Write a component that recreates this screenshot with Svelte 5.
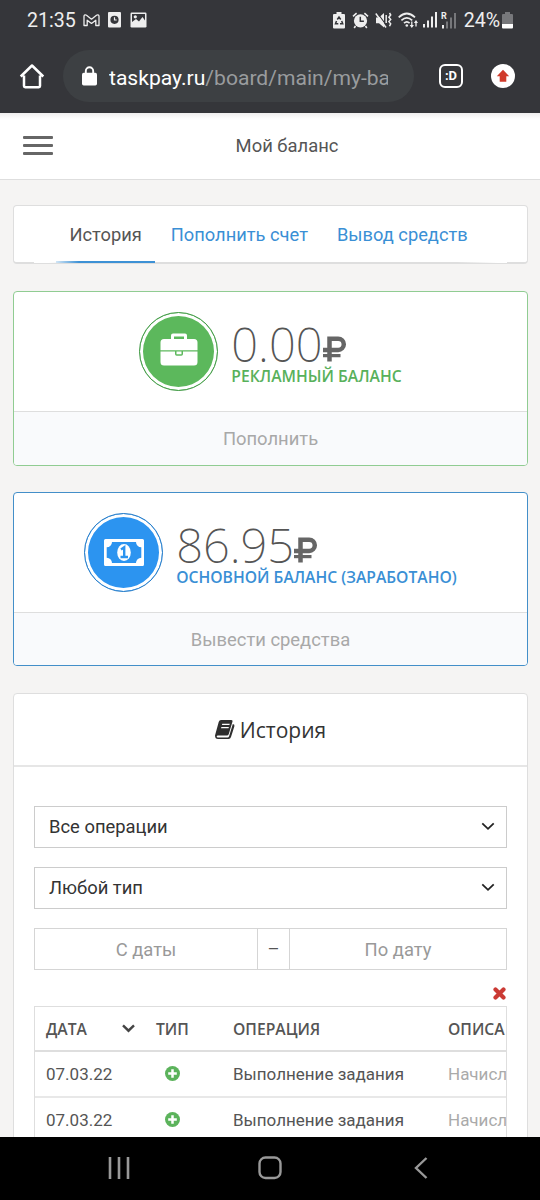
<script lang="ts">
  type Balance = {
    kind: string;
    amount: string;
    label: string;
    action: string;
  };

  const balances: Balance[] = [
    { kind: 'green', amount: '0.00', label: 'Рекламный баланс', action: 'Пополнить' },
    { kind: 'blue', amount: '86.95', label: 'Основной баланс (заработано)', action: 'Вывести средства' },
  ];

  const tabs = ['История', 'Пополнить счет', 'Вывод средств'];
  let activeTab = $state(0);

  const filters = ['Все операции', 'Любой тип'];

  const rows = [
    { date: '07.03.22', operation: 'Выполнение задания', description: 'Начисл' },
    { date: '07.03.22', operation: 'Выполнение задания', description: 'Начисл' },
  ];
</script>

<div class="screen">
  <div class="chrome">
    <div class="status">
      <span class="time">21:35</span>
      <svg class="gmail" width="17" height="13" viewBox="0 0 17 13" fill="none" stroke="#eee" stroke-width="1.3" stroke-linejoin="round">
        <path d="M1 11.500V2.200C1 .8 2.500.5 3.500 1.300L8.500 5.200l5-3.900c1-.8 2.500-.5 2.500.9v9.300h-3.200V6.200L8.500 9.400 4.200 6.200v5.300z" />
      </svg>
      <svg class="clock" width="13" height="16" viewBox="0 0 13 16">
        <rect width="13" height="15.500" rx="1" fill="#eee" />
        <circle cx="6.500" cy="7.800" r="4.100" fill="#35363a" />
        <path d="M6.500 5.300v2.700h2.200" fill="none" stroke="#eee" stroke-width="1.200" />
      </svg>
      <svg class="photo" width="17" height="16" viewBox="0 0 17 16">
        <rect x=".5" y=".5" width="16" height="15" rx="1.200" fill="#eee" />
        <path d="M2 10l4-3 3 2.500L12.500 5 15 8.500V2H2z" fill="#35363a" />
        <circle cx="5.300" cy="4.800" r="1.600" fill="#eee" />
      </svg>

      <div class="status-right">
        <svg width="12" height="17" viewBox="0 0 12 17">
          <path d="M3.500 0h5v2H11q1 0 1 1v12.500q0 1-1 1H1q-1 0-1-1V3q0-1 1-1h2.500z" fill="#eee" />
          <path d="M4.300 7.500L6 5l1.700 2.500M8.700 9l1 2.700H7M5.300 11.700H2.500l1-2.700" fill="none" stroke="#35363a" stroke-width="1.500" />
        </svg>
        <svg class="alarm" width="17" height="17" viewBox="0 0 17 17" fill="none" stroke="#eee">
          <circle cx="8.500" cy="8.800" r="6.600" fill="#eee" stroke="none" />
          <path d="M1 4.300L4.600 1.200M12.400 1.200L16 4.300M3.500 14l-1.300 2M13.500 14l1.300 2" stroke-width="1.600" />
          <path d="M8.300 4.800v4.500h3.600" stroke="#35363a" stroke-width="1.500" />
        </svg>
        <svg class="mute" width="17" height="17" viewBox="0 0 17 17" fill="none" stroke="#eee">
          <path d="M1 5.500h3l5-4.500v14.500l-5-4.200H1z" fill="#eee" stroke="none" />
          <path d="M2 .5l9.500 13" stroke="#35363a" stroke-width="1.200" />
          <path d="M.8 1.500L11 15.500" stroke-width="1.500" />
          <path d="M11.200 3v8M14.500 1l1.200 2-1.800 2.200 1.800 2.200-1.800 2.200 1.800 2.200-1.200 2.500" stroke-width="1.500" />
        </svg>
        <svg class="wifi" width="21" height="17" viewBox="0 0 21 17" fill="none" stroke="#eee" stroke-width="1.700">
          <path d="M.7 5.300Q8.800-2.300 17 5.300M3.400 8.300q5.400-5 10.800 0M6 11.200q2.800-2.600 5.600 0" />
          <circle cx="8.800" cy="13.500" r="1.300" fill="#eee" stroke="none" />
          <path d="M13.800 9.500v5M18 14.500v-5" stroke-width="1.300" />
          <path d="M11.700 13h4.200l-2.100 3zM15.900 11H20l-2-3z" fill="#eee" stroke="none" />
        </svg>
        <svg class="signal" width="14" height="16" viewBox="0 0 14 16" fill="#eee">
          <rect y="12" width="2" height="3.500" /><rect x="4" y="8.500" width="2" height="7" />
          <rect x="8" y="4.500" width="2" height="11" /><rect x="12" y="0" width="2" height="15.500" />
        </svg>
        <svg class="roaming" width="16" height="17" viewBox="0 0 16 17" fill="#77787b">
          <text x="0" y="7" font-family="Roboto, sans-serif" font-size="9" font-weight="700" fill="#eee">R</text>
          <rect x="1" y="13" width="2" height="3.500" fill="#eee" /><rect x="5" y="9.500" width="2" height="7" />
          <rect x="9" y="5.500" width="2" height="11" /><rect x="13" y="1" width="2" height="15.500" />
        </svg>
        <span class="percent">24%</span>
        <svg class="battery" width="11" height="17" viewBox="0 0 11 17">
          <path d="M3 0h5v2h2q1 0 1 1v9H0V3q0-1 1-1h2z" fill="#77787b" />
          <path d="M0 12h11v3.500q0 1-1 1H1q-1 0-1-1z" fill="#fff" />
        </svg>
      </div>
    </div>

    <div class="toolbar">
      <svg width="26" height="26" viewBox="0 0 26 26" fill="none" stroke="#fff" stroke-width="2.500" stroke-linejoin="round">
        <path d="M1.700 13.500L13 2.500l11.300 11M5 12.500V23q0 1.200 1.200 1.200h13.600Q21 24.200 21 23V12.500" />
      </svg>
      <div class="url">
        <svg width="15" height="20" viewBox="0 0 15 20">
          <path d="M3.800 8V5a3.700 3.700 0 0 1 7.400 0v3" fill="none" stroke="#fff" stroke-width="1.900" />
          <rect y="6.800" width="15" height="12.700" rx="1.700" fill="#fff" />
        </svg>
        <span class="address">taskpay.ru<i>/board/main/my-ba</i></span>
      </div>
      <div class="tab-count">:D</div>
      <svg class="update" width="24" height="24" viewBox="0 0 24 24">
        <circle cx="12" cy="12" r="12" fill="#fff" />
        <path d="M12 5.700l6.200 6.500h-2.900v5.500H8.700v-5.500H5.800z" fill="#d03a2b" />
      </svg>
    </div>
  </div>

  <header>
    <button class="burger" aria-label="Меню"><span></span><span></span><span></span></button>
    <h1>Мой баланс</h1>
  </header>

  <main>
    <nav>
      {#each tabs as tab, i}
        <button class="tab" class:active={activeTab === i} onclick={() => (activeTab = i)}>{tab}</button>
      {/each}
    </nav>

    {#each balances as balance}
      <section class="balance {balance.kind}">
        <div class="info">
          <div class="badge">
            {#if balance.kind === 'green'}
              <svg width="38" height="33" viewBox="0 0 38 33">
                <path d="M11 6V2.500Q11 .5 13 .5h12q2 0 2 2V6h7q3.500 0 3.500 3.500v7.800H.5V9.500Q.5 6 4 6zM14 6h10V3.500H14zM.5 18.500H15v2.500q0 1.700 1.700 1.700h4.600q1.700 0 1.700-1.700v-2.500h14.500V29q0 3.500-3.500 3.500H4Q.5 32.500.5 29zM16.500 18.500h5v2.700h-5z" fill="#fff" fill-rule="evenodd" />
              </svg>
            {:else}
              <svg width="40" height="27" viewBox="0 0 40 27">
                <path d="M1.500 0h37q1.500 0 1.500 1.500v24q0 1.500-1.500 1.500h-37Q0 27 0 25.500v-24Q0 0 1.500 0zM8 3a5.300 5.300 0 0 1-5.300 5.300v10.400A5.300 5.300 0 0 1 8 24h24a5.300 5.300 0 0 1 5.300-5.300V8.300A5.300 5.300 0 0 1 32 3z" fill="#fff" fill-rule="evenodd" />
                <ellipse cx="20" cy="13.500" rx="6.800" ry="8.500" fill="#fff" />
                <path d="M17 10.500l3.200-2.200v9.400M16.500 18h7.500" fill="none" stroke="#2c94f0" stroke-width="2.400" />
              </svg>
            {/if}
          </div>
          <div class="figures">
            <div class="amount">
              {balance.amount}<svg width="24" height="26" viewBox="0 0 24 26" fill="none" stroke="#666" stroke-width="4.500">
                <path d="M6.500 25.500V2.700h8.700a5.600 5.600 0 0 1 0 11.200H0" /><path d="M0 19.600h17.500" stroke-width="3.200" />
              </svg>
            </div>
            <div class="label">{balance.label}</div>
          </div>
        </div>
        <button class="action">{balance.action}</button>
      </section>
    {/each}

    <section class="history">
      <h2>
        <svg width="20" height="19" viewBox="0 0 20 19">
          <path d="M6 0h10.300q1.700 0 1.200 1.600L13.800 14q-.5 1.500-2 1.500H3q-1.300 0-1.300 1t1.300 1h9.400q1.300 0 1.700-1.300L17.800 4q2.200.5 1.600 2.300L16 17q-.6 2-2.600 2H3Q0 19 0 15.500L3.700 2Q4.300 0 6 0zM7.300 3.800l-.4 1.300h7.500l.4-1.300zM6.400 6.900L6 8.200h7.500l.4-1.300z" fill="#2f2f2f" fill-rule="evenodd" />
        </svg>
        История
      </h2>
      <div class="body">
        {#each filters as filter}
          <div class="select">
            {filter}
            <svg width="14" height="9" viewBox="0 0 14 9" fill="none" stroke="#222" stroke-width="1.800"><path d="M1.300 1.300L7 6.800l5.700-5.500" /></svg>
          </div>
        {/each}
        <div class="dates">
          <div class="from">С даты</div>
          <div class="dash">–</div>
          <div class="to">По дату</div>
        </div>
        <div class="reset">
          <svg width="13" height="13" viewBox="0 0 13 13" stroke="#cb3a34" stroke-width="4.200" stroke-linecap="round"><path d="M2.500 2.500l8 8M10.500 2.500l-8 8" /></svg>
        </div>
        <div class="table">
          <div class="row head">
            <span class="sort">Дата
              <svg width="13" height="9" viewBox="0 0 13 9" fill="none" stroke="#444" stroke-width="2.400"><path d="M1 1.300l5.500 5.400L12 1.300" /></svg>
            </span>
            <span>Тип</span>
            <span>Операция</span>
            <span>Описа</span>
          </div>
          {#each rows as row}
            <div class="row">
              <span>{row.date}</span>
              <span class="type">
                <svg width="15" height="15" viewBox="0 0 15 15">
                  <circle cx="7.500" cy="7.500" r="7.500" fill="#5cb35c" />
                  <path d="M7.500 3.200v8.600M3.200 7.500h8.600" stroke="#fff" stroke-width="2.500" />
                </svg>
              </span>
              <span>{row.operation}</span>
              <span class="muted">{row.description}</span>
            </div>
          {/each}
        </div>
      </div>
    </section>
  </main>

  <footer>
    <svg width="22" height="22" viewBox="0 0 22 22" stroke="#999" stroke-width="2.600"><path d="M2 0v22M11 0v22M20 0v22" /></svg>
    <svg class="home" width="24" height="24" viewBox="0 0 24 24" fill="none" stroke="#999" stroke-width="2.400"><rect x="1.500" y="1.500" width="21" height="20.500" rx="6" /></svg>
    <svg class="back" width="14" height="22" viewBox="0 0 14 22" fill="none" stroke="#999" stroke-width="2.400"><path d="M12.500 1L2 11l10.500 10" /></svg>
  </footer>
</div>

<style>
  :global(body) {
    background: #f5f4f3;
  }
  .screen {
    width: 540px;
    height: 1200px;
    display: flex;
    flex-direction: column;
    overflow: hidden;
    font-family: Roboto, sans-serif;
    font-size: 18.4px;
    color: #555;
    background: #f5f4f3;
  }
  .screen * {
    box-sizing: border-box;
  }
  svg {
    display: block;
    flex: none;
  }
  button {
    border: 0;
    padding: 0;
    background: none;
    font: inherit;
    color: inherit;
  }

  /* phone and browser bars */
  .chrome {
    height: 113px;
    flex: none;
    background: #35363a;
  }
  .status {
    height: 40px;
    padding: 0 27px;
    display: flex;
    align-items: center;
    font-size: 19.6px;
    color: #eee;
  }
  .time {
    width: 48px;
    margin-right: 8px;
  }
  .clock {
    margin-left: 8px;
  }
  .photo {
    margin-left: 9px;
  }
  .status-right {
    margin-left: auto;
    display: flex;
    align-items: center;
  }
  .alarm {
    margin-left: 7px;
  }
  .mute {
    margin-left: 6px;
  }
  .wifi {
    margin-left: 6px;
  }
  .signal {
    margin-left: 4px;
  }
  .roaming {
    margin-left: 4px;
  }
  .percent {
    margin-left: 7px;
  }
  .battery {
    margin-left: 2px;
  }
  .toolbar {
    padding: 10px 25px 0 19px;
    display: flex;
    align-items: center;
  }
  .url {
    width: 351px;
    height: 52px;
    margin-left: 18px;
    padding-left: 19px;
    display: flex;
    align-items: center;
    border-radius: 26px;
    background: #3d4043;
  }
  .address {
    width: 279px;
    margin-left: 12px;
    padding-top: 2px;
    overflow: hidden;
    white-space: nowrap;
    font-size: 21.1px;
    color: #fff;
  }
  .address i {
    font-style: normal;
    color: #999c9e;
  }
  .tab-count {
    width: 24px;
    height: 24px;
    margin-left: 25px;
    border: 2px solid #fff;
    border-radius: 6px;
    text-align: center;
    font-size: 13px;
    font-weight: 700;
    line-height: 19px;
    color: #fff;
  }
  .update {
    margin-left: auto;
  }

  header {
    height: 67px;
    flex: none;
    padding-bottom: 2px;
    display: flex;
    align-items: center;
    border-bottom: 1px solid #dedede;
    background: linear-gradient(#efeeee, #fff 6px);
  }
  .burger {
    width: 30px;
    height: 19px;
    margin: 1px 0 0 23px;
    display: flex;
    flex-direction: column;
    justify-content: space-between;
  }
  .burger span {
    width: 30px;
    height: 3px;
    border-radius: 1px;
    background: #666;
  }
  h1 {
    flex: 1;
    margin: 0 19px 0 0;
    text-align: center;
    font-size: 18.4px;
    font-weight: 400;
  }

  main {
    height: 957px;
    padding: 25px 12px 0 13px;
    overflow: hidden;
  }
  nav {
    position: relative;
    height: 59px;
    padding-left: 42px;
    display: flex;
    border: 1px solid #dedede;
    border-bottom-width: 2px;
    border-radius: 4px;
    background: #fff;
  }
  /* the strip of tabs fades out at both ends */
  nav::after {
    content: '';
    position: absolute;
    left: 20px;
    right: 20px;
    bottom: -1px;
    height: 3px;
    background: linear-gradient(90deg, #fff 15px, transparent 45px, transparent 423px, #fff 463px);
  }
  .tab {
    height: 57px;
    margin-right: 2px;
    padding: 0 13.5px 1px;
    white-space: nowrap;
    font-size: 18.3px;
    color: #3a8fd5;
  }
  .tab.active {
    padding-top: 1px;
    padding-bottom: 0;
    color: #555;
    border-bottom: 2px solid #3d91d5;
  }

  .balance {
    margin-top: 27px;
    border: 1px solid;
    border-radius: 4px;
    overflow: hidden;
    background: #fff;
  }
  .green {
    height: 175px;
    border-color: #90cc92;
  }
  .blue {
    height: 174px;
    margin-top: 26px;
    border-color: #438fc9;
  }
  .info {
    height: 119px;
    display: flex;
    justify-content: center;
    align-items: center;
  }
  .badge {
    width: 79px;
    height: 79px;
    display: flex;
    align-items: center;
    justify-content: center;
    border: 1px solid;
    border-radius: 50%;
    box-shadow: inset 0 0 0 3px #fff;
  }
  .green .badge {
    border-color: #459b49;
    background: #5cb85c;
  }
  .green .badge svg {
    margin-bottom: 5px;
  }
  .blue .badge {
    border-color: #2a7ec8;
    background: #2c94f0;
  }
  .figures {
    margin-left: 13px;
    font-family: 'Open Sans', sans-serif;
  }
  .amount {
    height: 50px;
    padding-top: 4px;
    display: flex;
    align-items: center;
    font-family: 'Noto Sans', 'Open Sans', sans-serif;
    font-size: 47px;
    font-weight: 200;
    line-height: 1;
    font-kerning: none;
    color: #555;
  }
  .amount svg {
    margin-top: 9px;
  }
  .label {
    font-size: 15.7px;
    font-weight: 600;
    line-height: 19px;
    text-transform: uppercase;
    white-space: nowrap;
  }
  .green .label {
    color: #58b15b;
  }
  .blue .label {
    color: #3a8fd5;
  }
  .action {
    width: 100%;
    height: 54px;
    display: block;
    border-top: 1px solid #dedede;
    background: #f9fafc;
    color: #a8a8a8;
  }
  .blue .action {
    height: 53px;
  }

  .history {
    height: 500px;
    margin-top: 27px;
    border: 1px solid #dedede;
    border-radius: 4px;
    background: #fff;
  }
  h2 {
    height: 73px;
    margin: 0;
    display: flex;
    align-items: center;
    justify-content: center;
    gap: 5px;
    border-bottom: 2px solid #e6e6e6;
    font-family: 'Open Sans', sans-serif;
    font-size: 21px;
    font-weight: 400;
    color: #333;
  }
  .body {
    padding: 39px 20px 0;
  }
  .select {
    height: 42px;
    margin-bottom: 19px;
    padding: 0 11px 2px 14px;
    display: flex;
    align-items: center;
    justify-content: space-between;
    border: 1px solid #ccc;
    color: #333;
  }
  .dates {
    height: 42px;
    display: flex;
    border: 1px solid #d5d5d5;
    line-height: 42px;
    text-align: center;
    color: #999;
  }
  .from {
    width: 222px;
  }
  .dash {
    width: 33px;
    border: solid #d5d5d5;
    border-width: 0 1px;
    line-height: 40px;
    color: #555;
  }
  .to {
    flex: 1;
  }
  .reset {
    height: 36px;
    display: flex;
    align-items: center;
    justify-content: flex-end;
    padding: 10px 1px 0 0;
  }
  .table {
    height: 200px;
    border: 1px solid #dedede;
    overflow: hidden;
  }
  .row {
    width: 560px;
    height: 46px;
    padding-bottom: 1px;
    display: grid;
    grid-template-columns: 110px 77px 215px 158px;
    align-items: center;
    border-bottom: 2px solid #e8e8e8;
    font-size: 17px;
  }
  .row > span {
    padding-left: 11px;
    white-space: nowrap;
  }
  .row .type {
    padding-left: 20px;
  }
  .row .muted {
    color: #aaa;
  }
  .head {
    height: 45px;
    padding-bottom: 0;
    font-family: 'Open Sans', sans-serif;
    font-size: 15.7px;
    font-weight: 600;
    text-transform: uppercase;
    color: #555;
    border-color: #dedede;
  }
  .row .sort {
    display: flex;
    align-items: center;
    justify-content: space-between;
    padding-right: 10px;
  }

  footer {
    height: 63px;
    flex: none;
    padding: 0 0 2px 108px;
    display: flex;
    align-items: center;
    background: #000;
  }
  .home {
    margin-left: 128px;
  }
  .back {
    margin-left: 132px;
  }
</style>
